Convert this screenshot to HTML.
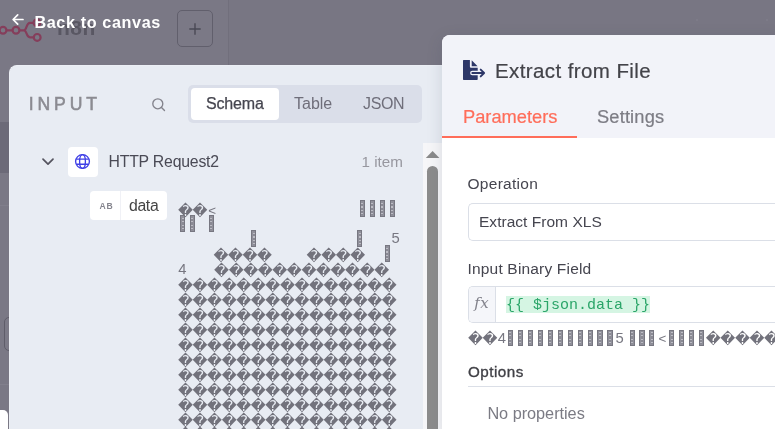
<!DOCTYPE html>
<html lang="en">
<head>
<meta charset="utf-8">
<title>Extract from File</title>
<style>
*{box-sizing:border-box;margin:0;padding:0}
html,body{width:775px;height:429px;overflow:hidden}
body{position:relative;background:#787683;font-family:"Liberation Sans",Arial,sans-serif;color:#444;}
#wrap{position:absolute;left:0;top:0;width:775px;height:429px;overflow:hidden;will-change:transform}
.abs{position:absolute}
.t{position:absolute;white-space:nowrap;line-height:1}
/* backdrop */
#side{left:0;top:0;width:228px;height:429px;background:#7a7885}
#sideband{left:0;top:122px;width:10px;height:51px;background:#6c6a78}
#sl1{left:0;top:205px;width:10px;height:1px;background:#807e8b}
#sl2{left:0;top:384px;width:10px;height:1px;background:#817f8c}
#sbtn{left:4px;top:317px;width:20px;height:34px;border:1px solid #5f5d6a;border-radius:5px;background:#7c7a87}
#wcorner{left:-4px;top:410px;width:12.4px;height:30px;background:#fff;border-radius:5px}
#vline{left:228px;top:0;width:1px;height:65px;background:#716f7c}
#plus{left:177px;top:10px;width:36px;height:37px;border:1px solid #615f6c;border-radius:5px;background:#7b7986}
#n8n{left:57px;top:17.2px;font-size:21px;font-weight:bold;color:#595763;letter-spacing:0.5px}
#back{left:34.4px;top:13.6px;font-size:16.2px;font-weight:bold;color:#fff;letter-spacing:0.62px}
/* input panel */
#inp{left:9px;top:65px;width:434px;height:380px;background:#e8ecf3;border-radius:8px 0 0 0;border-left:1px solid #eceff5;border-top:1px solid #eceff5}
#inputlbl{left:28.8px;top:95.5px;font-size:17.6px;font-weight:normal;-webkit-text-stroke:0.55px #8b8b92;color:#8b8b92;letter-spacing:3.85px}
#tabs{left:188px;top:85px;width:234px;height:38px;background:#dadee9;border-radius:5px}
#tabact{left:191px;top:88px;width:88px;height:32px;background:#fff;border-radius:4px}
.tab{font-size:16px;top:96px;color:#6f6e7a}
#hdr{left:108.5px;top:154px;font-size:15.8px;color:#4a4a55;letter-spacing:-0.2px}
#items{left:361.5px;top:154px;font-size:15.2px;color:#97979f}
#globebox{left:68px;top:147px;width:30px;height:30px;background:#fff;border-radius:4px}
#pill{left:89.8px;top:191.3px;width:77.2px;height:28.3px;background:#fff;border-radius:4px}
#pilldiv{left:120px;top:191.3px;width:1px;height:28.3px;background:#f0f1f6}
#ab{left:99.4px;top:201.8px;font-size:8.6px;color:#85858e;letter-spacing:0.9px;font-weight:bold}
#datalbl{left:129px;top:198px;font-size:15.8px;color:#444;letter-spacing:-0.35px}
/* scrollbar */
#sbtrack{left:423.3px;top:143px;width:20px;height:300px;background:#f6f6f8}
#sbthumb{left:426.8px;top:165.8px;width:11.2px;height:300px;background:#8c8c8c;border-radius:5.6px}
/* binary text */
#bin{left:0;top:0;width:423px;height:429px;overflow:hidden}
.row{position:absolute;white-space:nowrap;font-family:"DejaVu Sans","Liberation Sans",sans-serif;font-size:14.6px;letter-spacing:-0.41px;line-height:15px;height:15px;color:#72727c}
.row.lt{font-family:"Liberation Sans",sans-serif;font-size:14.8px;letter-spacing:0;color:#777781}
.row.lt2{font-family:"Liberation Sans",sans-serif;font-size:13.4px;letter-spacing:0;color:#777781}
.bx{position:absolute;display:block;width:5.2px;height:16.5px;background:#90909a;border:1px solid #777781;border-left-width:1.2px;border-right-width:1.2px}
.bx:after{content:"";position:absolute;left:0.6px;right:0.6px;top:1.5px;bottom:1px;background:repeating-linear-gradient(to bottom,#bcbcc4 0,#bcbcc4 1.2px,#8a8a94 1.2px,#8a8a94 3.3px)}
/* right panel */
#rp{left:442.3px;top:35px;width:340px;height:400px;background:#fff;border-radius:8px 0 0 0;overflow:hidden}
#rpsh{left:442.3px;top:35px;width:340px;height:400px;border-radius:8px 0 0 0;box-shadow:0 4px 16px rgba(50,61,85,0.15)}
#rphead{left:0;top:0;width:340px;height:103px;background:#f2f3f9}
#title{left:495px;top:61px;font-size:20.5px;color:#434349;font-weight:normal;-webkit-text-stroke:0.2px #434349;letter-spacing:0.4px}
#tparam{left:463px;top:108px;font-size:18.3px;color:#ff6d5a;-webkit-text-stroke:0.2px #ff6d5a}
#tsett{left:597px;top:108px;font-size:18.3px;color:#7c7c84;-webkit-text-stroke:0.2px #7c7c84;letter-spacing:0.15px}
#uline{left:442.3px;top:136px;width:134.7px;height:2px;background:#ff6d5a}
.lbl{font-size:15.5px;color:#45454f}
.box{border:1px solid #dbdfe7;border-right:none;border-radius:5px 0 0 5px;background:#fff}
#sel{left:468px;top:203px;width:320px;height:38px}
#expr{left:468px;top:286px;width:320px;height:37px}
#fxbox{left:469px;top:287px;width:27.2px;height:35px;background:#f5f6fa;border-right:1px solid #dbdfe7;border-radius:4px 0 0 4px}
#fx{left:474.3px;top:295.6px;font-family:"DejaVu Serif","Liberation Serif",serif;font-style:italic;font-size:15px;color:#80808a;letter-spacing:0.3px}
#code{left:506px;top:296px;height:17px;line-height:17px;font-family:"Liberation Mono",monospace;font-size:15px;color:#2aa568;background:#d5f5e3}
#hint{left:0;top:0;width:775px;height:429px;overflow:hidden}
#opt{left:468px;top:364.4px;font-size:15.2px;font-weight:normal;-webkit-text-stroke:0.35px #404046;color:#404046;letter-spacing:0.5px}
#optline{left:468px;top:386px;width:320px;height:1px;background:#dbdfe7}
#noprop{left:487.4px;top:405.1px;font-size:16.3px;color:#7b7b84;letter-spacing:-0.03px}
</style>
</head>
<body>
<div id="wrap">
<!-- backdrop -->
<div class="abs" id="side"></div>
<div class="abs" id="sideband"></div>
<div class="abs" id="vline"></div>
<div class="abs" id="sl1"></div>
<div class="abs" id="sl2"></div>
<div class="abs" id="sbtn"></div>
<div class="abs" id="wcorner"></div>
<svg class="abs" style="left:0;top:18px" width="46" height="28" viewBox="0 18 46 28" fill="none" stroke="#853e5b" stroke-width="2.2">
<circle cx="3" cy="30.3" r="3.4"/><circle cx="16" cy="30.3" r="3.4"/><path d="M6.5 30.3h6M19.5 30.3h4.5M24 30.3c3 0 2-7.5 6-7.5h3M24 30.3c3 0 2 7 6 7h3"/><circle cx="37.2" cy="37.4" r="3.4"/><circle cx="37" cy="22.7" r="3.4"/>
</svg>
<div class="abs" style="left:696px;top:19px;width:2px;height:2px;background:#7d7b88"></div><div class="abs" style="left:766px;top:19px;width:2px;height:2px;background:#7d7b88"></div>
<div class="t" id="n8n">n8n</div>
<div class="abs" id="plus"></div>
<svg class="abs" style="left:189px;top:23px" width="12" height="12" viewBox="0 0 12 12" stroke="#4a4955" stroke-width="1.4"><path d="M6 0.3v11.4M0.3 6h11.4"/></svg>
<svg class="abs" style="left:11px;top:13px" width="14" height="13" viewBox="0 0 14 13" fill="none" stroke="#fff" stroke-width="1.7" stroke-linecap="round" stroke-linejoin="round"><path d="M12 6.5h-9.8M6.7 1.9L2.1 6.5l4.6 4.6"/></svg>
<div class="t" id="back">Back to canvas</div>

<!-- input panel -->
<div class="abs" id="inp"></div>
<div class="t" id="inputlbl">INPUT</div>
<svg class="abs" style="left:151px;top:97px" width="15" height="15" viewBox="0 0 15 15" fill="none" stroke="#83838c" stroke-width="1.35" stroke-linecap="round"><circle cx="6.8" cy="6.8" r="5"/><path d="M10.5 10.5l3 3"/></svg>
<div class="abs" id="tabs"></div>
<div class="abs" id="tabact"></div>
<div class="t tab" id="tschema" style="left:206px;color:#45454f;letter-spacing:-0.15px;-webkit-text-stroke:0.25px #45454f">Schema</div>
<div class="t tab" id="ttable" style="left:294px">Table</div>
<div class="t tab" id="tjson" style="left:363px;letter-spacing:-0.35px">JSON</div>

<svg class="abs" style="left:41px;top:157.3px" width="14" height="10" viewBox="0 0 14 10" fill="none" stroke="#55545f" stroke-width="1.7" stroke-linecap="round" stroke-linejoin="round"><path d="M2 2.2l5 5L12 2.2"/></svg>
<div class="abs" id="globebox"></div>
<svg class="abs" style="left:74px;top:153px" width="17" height="17" viewBox="0 0 17 17" fill="none" stroke="#3f3fe6" stroke-width="1.35"><circle cx="8.5" cy="8.5" r="6.9"/><ellipse cx="8.5" cy="8.5" rx="2.9" ry="6.9"/><path d="M2.3 6.1h12.4M2.3 11.2h12.4"/></svg>
<div class="t" id="hdr">HTTP Request2</div>
<div class="t" id="items">1 item</div>

<div class="abs" id="pill"></div>
<div class="abs" id="pilldiv"></div>
<div class="t" id="ab">AB</div>
<div class="t" id="datalbl">data</div>

<div class="abs" id="bin">
<div class="row" style="top:203.2px;left:178px">��</div>
<div class="row lt2" style="top:203.0px;left:208.3px">&lt;</div>
<i class="bx" style="top:200.2px;left:359.9px"></i>
<i class="bx" style="top:200.2px;left:369.85px"></i>
<i class="bx" style="top:200.2px;left:379.8px"></i>
<i class="bx" style="top:200.2px;left:389.75px"></i>
<i class="bx" style="top:215.15px;left:180.1px"></i>
<i class="bx" style="top:215.15px;left:189.9px"></i>
<i class="bx" style="top:215.15px;left:208.8px"></i>
<i class="bx" style="top:230.1px;left:251px"></i>
<i class="bx" style="top:230.1px;left:357px"></i>
<div class="row lt" style="top:231.4px;left:391.6px">5</div>
<div class="row" style="top:248.05px;left:213.4px">����</div>
<div class="row" style="top:248.05px;left:306.6px">����</div>
<i class="bx" style="top:245.05px;left:384.8px"></i>
<div class="row lt" style="top:261.7px;left:178.3px">4</div>
<div class="row" style="top:263.0px;left:214.1px">������������</div>
<div class="row" style="top:277.95px;left:178px">���������������</div>
<div class="row" style="top:292.9px;left:178px">���������������</div>
<div class="row" style="top:307.85px;left:178px">���������������</div>
<div class="row" style="top:322.8px;left:178px">���������������</div>
<div class="row" style="top:337.75px;left:178px">���������������</div>
<div class="row" style="top:352.7px;left:178px">���������������</div>
<div class="row" style="top:367.65px;left:178px">���������������</div>
<div class="row" style="top:382.6px;left:178px">���������������</div>
<div class="row" style="top:397.55px;left:178px">���������������</div>
<div class="row" style="top:412.5px;left:178px">���������������</div>
<div class="row" style="top:427.45px;left:178px">���������������</div>
</div>

<div class="abs" id="sbtrack"></div>
<svg class="abs" style="left:425px;top:150px" width="15" height="9" viewBox="0 0 15 9"><path d="M0.8 8.1L7.6 0.9l6.8 7.2z" fill="#8a8a8a"/></svg>
<div class="abs" id="sbthumb"></div>

<!-- right panel -->
<div class="abs" id="rpsh"></div>
<div class="abs" id="rp"><div class="abs" id="rphead"></div></div>
<svg class="abs" style="left:463.4px;top:60.3px" width="23" height="20" viewBox="0 0 23 20"><path fill="#2d3768" d="M0.6 0H6.9V6.4c0 0.8 0.6 1.4 1.4 1.4H14.7V19.2c0 0.4-0.3 0.7-0.7 0.7H0.6c-0.3 0-0.6-0.3-0.6-0.6V0.6C0 0.3 0.3 0 0.6 0zM8.7 0.3L14.6 6.2H8.7z"/><path d="M9.3 13H14.7" stroke="#f2f3f9" stroke-width="4.4" stroke-linecap="round" fill="none"/><path d="M9.3 13H20.8M17.7 9.6L21.1 13l-3.4 3.4" stroke="#2d3768" stroke-width="1.9" stroke-linecap="round" stroke-linejoin="round" fill="none"/></svg>
<div class="t" id="title">Extract from File</div>
<div class="t" id="tparam">Parameters</div>
<div class="t" id="tsett">Settings</div>
<div class="abs" id="uline"></div>

<div class="t lbl" id="lop" style="left:467.5px;top:175.8px;letter-spacing:0.28px">Operation</div>
<div class="abs box" id="sel"></div>
<div class="t" id="selval" style="left:479px;top:213.5px;font-size:15.5px;color:#45454f;letter-spacing:0.03px">Extract From XLS</div>
<div class="t lbl" id="libf" style="left:467.5px;top:260.8px;letter-spacing:0.18px">Input Binary Field</div>
<div class="abs box" id="expr"></div>
<div class="abs" id="fxbox"></div>
<div class="t" id="fx">fx</div>
<div class="t" id="code"><span style="position:relative;top:0.8px">{{ $json.data }}</span></div>
<div class="abs" id="hint">
<div class="row" style="top:331.15px;left:468px">��</div>
<div class="row lt" style="top:330.5px;left:497.8px">4</div>
<i class="bx" style="top:329.5px;left:507.9px"></i>
<i class="bx" style="top:329.5px;left:517.85px"></i>
<i class="bx" style="top:329.5px;left:527.8px"></i>
<i class="bx" style="top:329.5px;left:537.75px"></i>
<i class="bx" style="top:329.5px;left:547.7px"></i>
<i class="bx" style="top:329.5px;left:557.65px"></i>
<i class="bx" style="top:329.5px;left:567.6px"></i>
<i class="bx" style="top:329.5px;left:577.55px"></i>
<i class="bx" style="top:329.5px;left:587.5px"></i>
<i class="bx" style="top:329.5px;left:597.45px"></i>
<i class="bx" style="top:329.5px;left:607.4px"></i>
<div class="row lt" style="top:330.5px;left:615.4px">5</div>
<i class="bx" style="top:329.5px;left:629.5px"></i>
<i class="bx" style="top:329.5px;left:639.4px"></i>
<i class="bx" style="top:329.5px;left:649.3px"></i>
<div class="row lt2" style="top:330.95px;left:658.4px">&lt;</div>
<i class="bx" style="top:329.5px;left:669.1px"></i>
<i class="bx" style="top:329.5px;left:679px"></i>
<i class="bx" style="top:329.5px;left:688.9px"></i>
<i class="bx" style="top:329.5px;left:698.8px"></i>
<div class="row" style="top:331.15px;left:705.8px">������</div>
</div>
<div class="t" id="opt">Options</div>
<div class="abs" id="optline"></div>
<div class="t" id="noprop">No properties</div>
</div>
</body>
</html>
